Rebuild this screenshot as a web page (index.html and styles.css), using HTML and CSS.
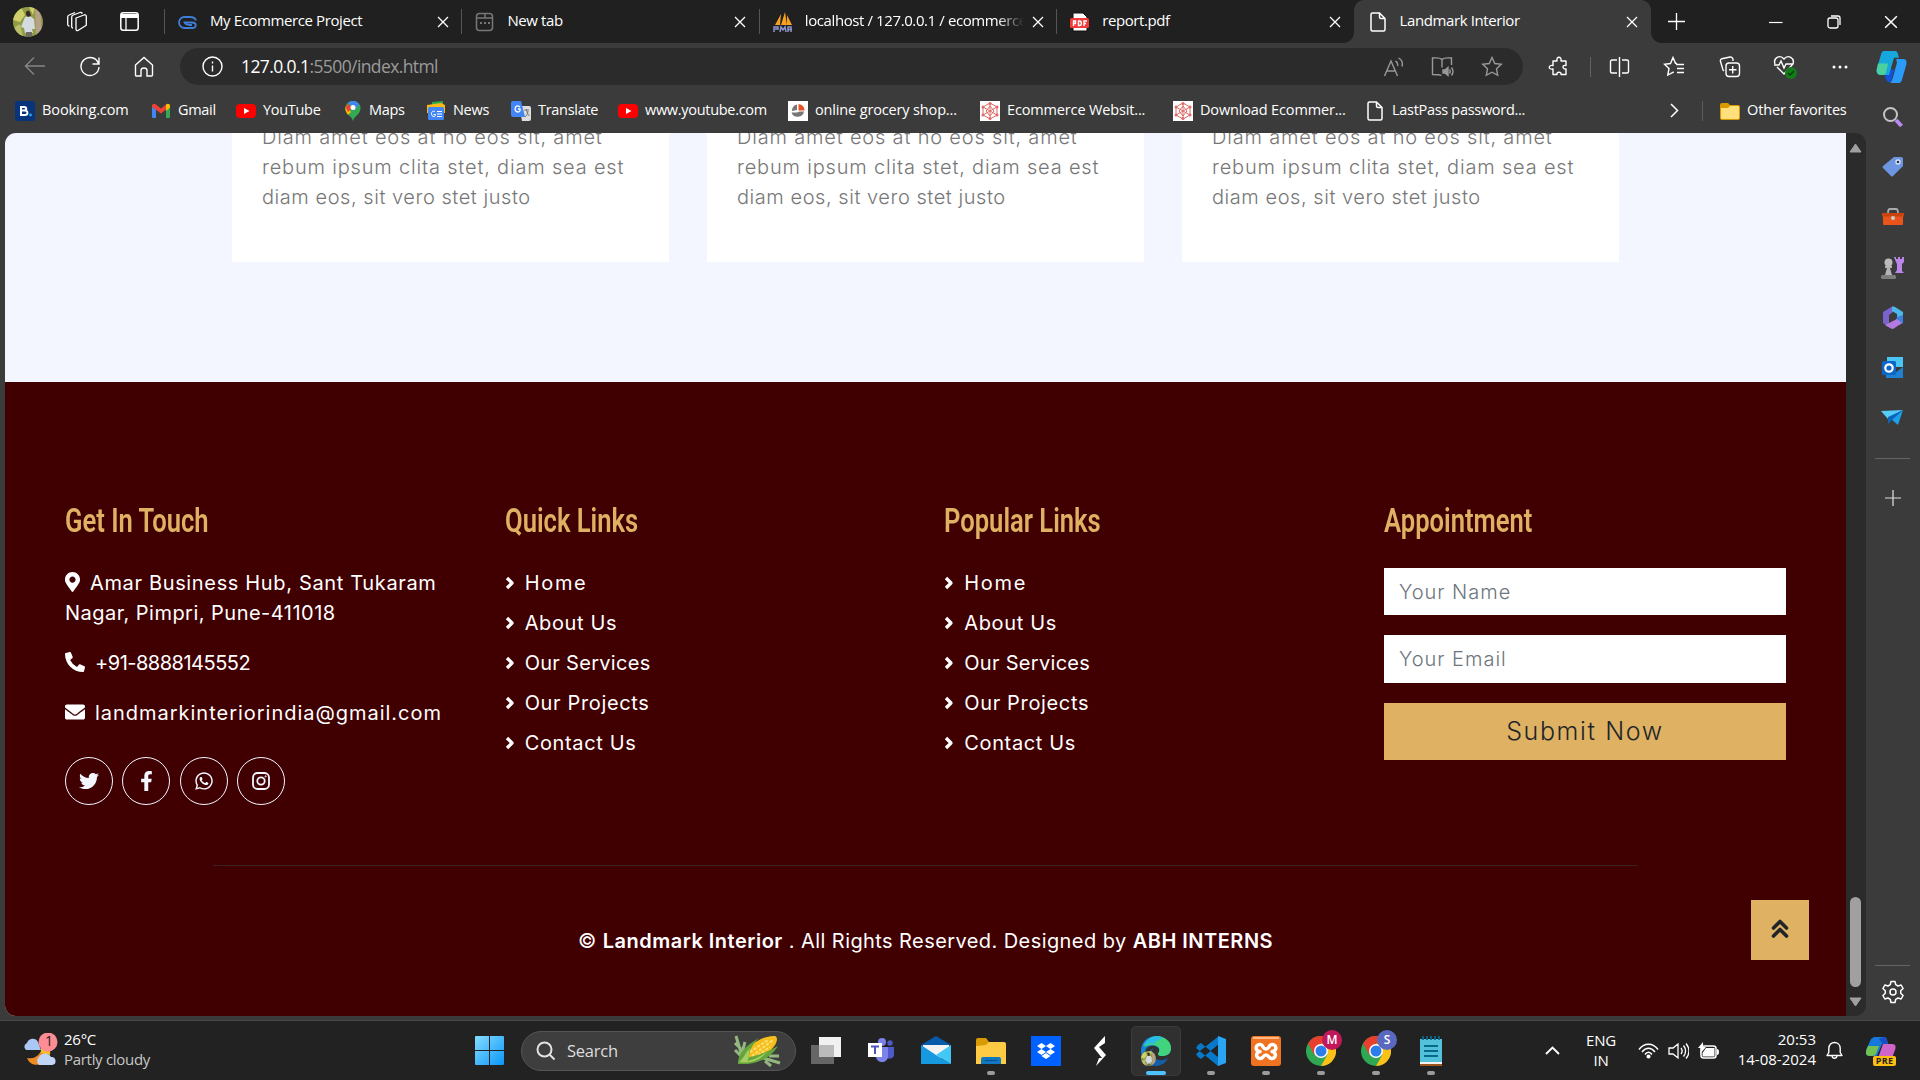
FILE: index.html
```html
<!DOCTYPE html>
<html lang="en">
<head>
<meta charset="utf-8">
<title>Landmark Interior</title>
<link rel="stylesheet" href="styles.css">
</head>
<body>
<svg class="sprite" aria-hidden="true">
  <symbol id="close" viewBox="0 0 12 12"><path d="M1 1l10 10M11 1L1 11" fill="none" stroke="currentColor" stroke-width="1.3"/></symbol>
  <symbol id="page" viewBox="0 0 16 20"><path d="M2.500 1h7L15 6.500V17.500a1.500 1.500 0 0 1-1.500 1.500h-11A1.500 1.500 0 0 1 1 17.500v-15A1.500 1.500 0 0 1 2.500 1zM9.500 1v4a1.500 1.500 0 0 0 1.500 1.500h4" fill="none" stroke="#fff" stroke-width="1.500"/></symbol>
  <symbol id="yt" viewBox="0 0 20 14"><rect width="20" height="14" rx="4" fill="#f00"/><path d="M8 4l5.500 3L8 10z" fill="#fff"/></symbol>
  <symbol id="mesh" viewBox="0 0 20 20"><path fill="#fff" d="M0 0h20v20H0z"/><g fill="none" stroke="#e06b66" stroke-width="1"><path d="M10 2l7 4v8l-7 4-7-4V6zM10 2v16M3 6l14 8M17 6L3 14M10 5l4 5-4 5-4-5z"/></g><g fill="#e06b66"><circle cx="10" cy="2.500" r="1.500"/><circle cx="10" cy="17.500" r="1.500"/><circle cx="3" cy="6" r="1.500"/><circle cx="17" cy="6" r="1.500"/><circle cx="3" cy="14" r="1.500"/><circle cx="17" cy="14" r="1.500"/></g></symbol>
  <symbol id="plus" viewBox="0 0 18 18"><path d="M9 0v18M0 9h18" stroke="currentColor" stroke-width="1.400"/></symbol>
  <symbol id="angle" viewBox="0 0 10 14"><path d="M2 2l5 5-5 5" fill="none" stroke="#fff" stroke-width="3.300" stroke-linejoin="round"/></symbol>
  <symbol id="portrait" viewBox="0 0 30 30"><clipPath id="round"><circle cx="15" cy="15" r="15"/></clipPath><g clip-path="url(#round)"><path fill="#8f9c45" d="M0 0h30v30H0z"/><path fill="#d0cf6a" d="M0 5l8-5 4 8-5 7-7-2zM22 0h-6l4 8z"/><path fill="#b9a088" d="M22 0h5l2 30h-6z"/><path fill="#b9bf6a" d="M2 20l5-3 3 13H3z"/><path fill="#d3dbe0" d="M12 10l5-1 4 3 1 10h-3l1 4h-8l-1-5-3-1z"/><path fill="#6f6a64" d="M13 25h6v5h-6z"/><path fill="#3b2a24" d="M13 5q2-3 4 0l1 4-3 1-2-2z"/></g></symbol>
  <symbol id="chrome" viewBox="0 0 30 30"><circle cx="15" cy="15" r="15" fill="#30a853"/><path fill="#e8402f" d="M2 7.500A15 15 0 0 1 28 7.500H15L8.500 19z"/><path fill="#fbc116" d="M28 7.500A15 15 0 0 1 15 30l6.500-11.500L15 7.500z"/><circle cx="15" cy="15" r="7" fill="#fff"/><circle cx="15" cy="15" r="5.500" fill="#2b7de9"/></symbol>
</svg>

<div class="browser">
  <header class="tabs">
    <div class="tab-tools">
      <svg class="avatar" viewBox="0 0 30 30"><use href="#portrait"/></svg>
      <svg width="22" height="21" viewBox="0 0 22 21" fill="none" stroke="#fff" stroke-width="1.300"><path d="M10 7l8-3a1.500 1.500 0 0 1 2.300 1.300v9L12 19.500c-1.500.5-2-.5-2-1.500z" stroke-linejoin="round"/><path d="M7 17c-1 0-1.500-1-1.300-2V6c0-1 .6-1.700 1.500-2L14 1.500c1-.3 2 .2 2.300 1.200M3.500 15c-1.300 0-2-1-1.800-2V6c0-1 .6-1.700 1.500-2L9 1.500"/></svg>
      <svg width="19" height="19" viewBox="0 0 19 19"><rect x=".8" y=".8" width="17.400" height="17.400" rx="2.500" fill="none" stroke="#fff" stroke-width="1.500"/><path d="M1 2h17v4H1z" fill="#fff"/><path d="M6 6v12" stroke="#fff" stroke-width="1.300"/></svg>
    </div>
    <div class="tab">
      <svg class="fav" viewBox="0 0 20 20" fill="none" stroke="#3f7fd9" stroke-width="1.800"><path d="M18 8.500C17 5.500 15 5 12 5H6.500a5 5 0 0 0 0 11H14c5 0 5-5.500 0-5.500H6.500c1 2.500 3 2.500 5 2.500H14"/></svg>
      <span class="tab-name">My Ecommerce Project</span><svg class="x"><use href="#close"/></svg>
    </div>
    <div class="tab">
      <svg class="fav" viewBox="0 0 20 20" fill="none" stroke="#777" stroke-width="1.500"><rect x="1.500" y="1.500" width="16" height="17" rx="3"/><path d="M1.500 6h16M10 2v4"/><path d="M5 11h2M9 11h2M13 11h2" stroke-width="2"/></svg>
      <span class="tab-name">New tab</span><svg class="x"><use href="#close"/></svg>
    </div>
    <div class="tab">
      <svg class="fav" viewBox="0 0 20 20"><path fill="#f7a021" d="M8 2l-6 11h5zM12 0L8 13h6zM14 3l5 10h-5z"/><path fill="none" stroke="#8d93cc" stroke-width="1.500" d="M1 20v-5h4v2H2M7 20l1-5 2 3 2-3 1 5M15 20v-5h3v5M15 17.500h4"/></svg>
      <span class="tab-name fade">localhost / 127.0.0.1 / ecommerce</span><svg class="x"><use href="#close"/></svg>
    </div>
    <div class="tab">
      <svg class="fav" viewBox="0 0 20 20"><path fill="#fff" stroke="#111" d="M3 1h10l4 4v14H3z"/><rect y="6" width="19" height="10" rx="1.500" fill="#f33a3a"/><path fill="none" stroke="#fff" stroke-width="1.400" d="M3.500 14V9h2v2.500h-2M8.500 9v4.500h1c2.500 0 2.500-4.500 0-4.500zM14 14V9h3M14 11.500h2"/></svg>
      <span class="tab-name">report.pdf</span><svg class="x"><use href="#close"/></svg>
    </div>
    <div class="tab active">
      <svg class="fav sheet"><use href="#page"/></svg>
      <span class="tab-name">Landmark Interior</span><svg class="x"><use href="#close"/></svg>
    </div>
    <div class="new-tab"><svg width="17" height="17"><use href="#plus"/></svg></div>
    <div class="window-keys">
      <svg width="14" height="14" viewBox="0 0 14 14"><path d="M0 7.500h13.500" stroke="#fff" stroke-width="1.200"/></svg>
      <svg width="14" height="14" viewBox="0 0 14 14" fill="none" stroke="#fff" stroke-width="1.300"><rect x="1" y="3" width="10" height="10" rx="2"/><path d="M4 1h7a2 2 0 0 1 2 2v7"/></svg>
      <svg width="14" height="14"><use href="#close"/></svg>
    </div>
  </header>

  <div class="toolbar">
    <div class="nav-keys">
      <svg class="dim" width="22" height="20" viewBox="0 0 22 20"><path d="M21 10H2M10 1.500L1.500 10l8.500 8.500"/></svg>
      <svg width="22" height="22" viewBox="0 0 22 22"><path d="M19.500 7.500A9 9 0 1 0 20 11M20 1.500v6.500h-6.500"/></svg>
      <svg width="20" height="22" viewBox="0 0 20 22"><path d="M1.500 9L10 1.500 18.500 9v10a1 1 0 0 1-1 1H13v-5.500c0-2-1-2.500-3-2.500s-3 .5-3 2.500V20H2.500a1 1 0 0 1-1-1z"/></svg>
    </div>
    <div class="address">
      <svg class="info" width="21" height="21" viewBox="0 0 21 21"><circle cx="10.500" cy="10.500" r="9.500"/><path d="M10.500 9.500v6M10.500 5.500v2"/></svg>
      <span class="url"><b>127.0.0.1</b>:5500/index.html</span>
      <div class="address-keys">
        <svg width="21" height="20" viewBox="0 0 21 20"><path d="M1.500 19L8 4l6.500 15M4 14h8M12.500 4c2 1 2.500 3 2 5M15.500 1c3.500 2 4.500 5 3.500 8.500"/></svg>
        <svg width="23" height="22" viewBox="0 0 23 22"><path d="M11 3.500c-2-2-4-2-9.500-1.500v16.500c5 0 7.500 0 9 1M11 3.500v8M11 3.500c2-2 4-2 9.500-1.500v7"/><path d="M12 14h2l3-2.500v8L14 17h-2z" fill="#999"/><path d="M18.500 13.500q1.500 2 0 4M20.500 11.500q3 4 0 8"/></svg>
        <svg width="22" height="21" viewBox="0 0 22 21"><path d="M11 1.500l2.800 6 6.500.8-4.800 4.500 1.200 6.500L11 16.200l-5.700 3.100 1.200-6.500L1.700 8.300l6.500-.8z"/></svg>
      </div>
    </div>
    <div class="tool-keys">
      <svg width="22" height="22" viewBox="0 0 22 22"><path d="M5 5h4c-1-5 5-5 4 0h5v4.500c-4-1-4 4 0 3.500v5.500h-5c1-3-5-3-4 0H5V13c-5 1-5-4.500 0-3.500z" stroke-linejoin="round"/></svg>
      <i></i>
      <svg width="21" height="20" viewBox="0 0 21 20"><path d="M8 3H3a1.500 1.500 0 0 0-1.500 1.500v10A1.500 1.500 0 0 0 3 16h5M13 3h5a1.500 1.500 0 0 1 1.500 1.500v10A1.500 1.500 0 0 1 18 16h-5M10.500 0v20"/></svg>
      <svg width="22" height="21" viewBox="0 0 22 21"><path d="M14 7.500l-1.500-.2L10 1.500l-2.500 6-6 .8L6 12.500l-1.200 6.500 6-3.200M13 8.500h8M14 12.500h7M14 16.500h7"/></svg>
      <svg width="22" height="22" viewBox="0 0 22 22"><rect x="7" y="7" width="13.500" height="13.500" rx="3"/><path d="M13.700 10v7.500M10 13.700h7.500M5 15l-1-1L1.500 5.500C1 4 2 3 3 2.700L11 1c1.500-.3 2.500.5 3 2v2"/></svg>
      <svg width="24" height="24" viewBox="0 0 24 24"><path d="M2 9C0 3 7-1 11 4c4-5 11-1 9 5l-9 10L4 12M1 10h5l2-4 3 7 2-4h7"/><circle cx="18" cy="18" r="6" fill="#127c18" stroke="none"/><path d="M15 18l2 2 4-4" stroke="#0a3a0a"/></svg>
      <svg width="18" height="6" viewBox="0 0 18 6"><g fill="#fff" stroke="none"><circle cx="3" cy="3" r="1.500"/><circle cx="9" cy="3" r="1.500"/><circle cx="15" cy="3" r="1.500"/></g></svg>
      <svg width="31" height="32" viewBox="0 0 31 28" preserveAspectRatio="none"><g stroke="none"><path fill="#1451dc" d="M8 16h10l-3 11c-4 1-5-2-6-5z"/><path fill="#16a7dc" d="M8 0h11c3 0 3 3 4 6h-5l-5 15H5c-4 0-5-3-4-6L5 3c.500-2 1.500-3 3-3z"/><path fill="#4bd1a0" d="M2 11h10l-2 8c-1 2-2 2-4 2-5 0-6-3-5-6z"/><path fill="#2a9bfa" d="M20 7h7c4 0 4 3 3 6l-4 12c-1 3-2 3-4 3h-8c2-1 2-3 3-5l4-13z"/></g></svg>
    </div>
  </div>

  <div class="body">
    <div class="left">
      <nav class="bookmarks">
        <a><svg viewBox="0 0 20 20"><rect width="20" height="20" rx="3" fill="#08347c"/><path d="M6 5v10M5 6h4c3 0 3 3.500 0 3.500H6h4c3.500 0 3 4.500 0 4.500H5" fill="none" stroke="#fff" stroke-width="2"/><circle cx="15.500" cy="14" r="1.400" fill="#27a8e8"/></svg><span>Booking.com</span></a>
        <a><svg viewBox="0 0 20 20"><path fill="#4285f4" d="M1 5h4v12H2q-1 0-1-1z"/><path fill="#34a853" d="M15 5h4v11q0 1-1 1h-3z"/><path fill="#ea4335" d="M1 5c0-2 2-3 4-1.500l5 4 5-4v5L10 12.500 1 6z"/><path fill="#fbbc04" d="M15 3.500C17 2 19 3 19 5v1.500L15 10z"/></svg><span>Gmail</span></a>
        <a><svg><use href="#yt"/></svg><span>YouTube</span></a>
        <a class="maps"><svg viewBox="0 0 20 20"><path fill="#34a853" d="M4 12C0 6 4 0 10 0s10 6 6 12c-2 3-5 4-6 8-1-4-4-5-6-8z"/><path fill="#fbbc04" d="M3 5l5 6-3 3C2 10 2 8 3 5z"/><path fill="#ea4335" d="M4 3l6 3-5 5-2-4z"/><path fill="#4285f4" d="M5 2c4-4 10-2 11 2l-6 6V6z"/><circle cx="10" cy="6.500" r="2.500" fill="#fff"/></svg><span>Maps</span></a>
        <a><svg viewBox="0 0 20 20"><path fill="#2ca84f" d="M6 1l11-1v8H6z"/><path fill="#f9b916" d="M1 4l14-2 4 2v8H1z"/><rect x="2" y="6" width="16" height="13" rx="1.500" fill="#4285f4"/><path d="M9 10.500c-4-2-5 5-1 5 1.500 0 1.500-2 1.500-2H7.500M11 10.500h5M11 13h5M11 15.500h5" fill="none" stroke="#fff"/></svg><span>News</span></a>
        <a><svg viewBox="0 0 20 20"><path fill="#ddd" d="M8 5h10q2 0 2 2v11q0 2-2 2h-7z"/><path fill="#4285f4" d="M2 0h8l4 16H2q-2 0-2-2V2q0-2 2-2z"/><path d="M9 6C4 2 2 11 7 11c3 0 2-3 2-3H7" fill="none" stroke="#fff" stroke-width="1.300"/><path d="M13 9h5M15.500 8c0 4 2 6 3 7M17 10c0 3-2 5-3 6" stroke="#777" fill="none"/></svg><span>Translate</span></a>
        <a><svg><use href="#yt"/></svg><span>www.youtube.com</span></a>
        <a class="wide"><svg viewBox="0 0 20 20"><path fill="#fff" d="M0 0h20v20H0z"/><path fill="#777" d="M9 3.500V9l-5 1a6 6 0 0 1 5-6.500zM3.500 11.500H9l2.500-1H16a6.500 6.500 0 0 1-12.500 1z"/><path fill="#e65222" d="M10.500 3q6 1 6 6.500h-6z"/></svg><span>online grocery shop...</span></a>
        <a class="wide"><svg><use href="#mesh"/></svg><span>Ecommerce Websit...</span></a>
        <a class="wide"><svg><use href="#mesh"/></svg><span>Download Ecommer...</span></a>
        <a><svg class="sheet"><use href="#page"/></svg><span>LastPass password...</span></a>
        <svg class="more" width="9" height="15" viewBox="0 0 9 15"><path d="M1 1l6.500 6.500L1 14" fill="none" stroke="#fff" stroke-width="1.500"/></svg>
        <i></i>
        <a class="wide"><svg viewBox="0 0 20 20"><path fill="#d99a00" d="M0 4q0-2 2-2h6l2 2h8q2 0 2 2v11q0 2-2 2H2q-2 0-2-2z"/><path fill="#ffe07d" d="M1 7h7l2-2h8q1 0 1 1v11q0 1-1 1H2q-1 0-1-1z"/></svg><span>Other favorites</span></a>
      </nav>

      <div class="viewport">
        <main class="site">
          <section class="services">
            <article class="card">Diam amet eos at no eos sit, amet<br>rebum ipsum clita stet, diam sea est<br><span>diam eos, sit vero stet justo</span></article>
            <article class="card">Diam amet eos at no eos sit, amet<br>rebum ipsum clita stet, diam sea est<br><span>diam eos, sit vero stet justo</span></article>
            <article class="card">Diam amet eos at no eos sit, amet<br>rebum ipsum clita stet, diam sea est<br><span>diam eos, sit vero stet justo</span></article>
          </section>
          <footer class="footer">
            <div class="columns">
              <div>
                <h4>Get In Touch</h4>
                <p><svg width="15" height="20" viewBox="0 0 384 512"><path fill="#fff" d="M172.268 501.670C26.970 291.031 0 269.413 0 192 0 85.961 85.961 0 192 0s192 85.961 192 192c0 77.413-26.970 99.031-172.268 309.670-9.535 13.774-29.930 13.773-39.464 0zM192 272c44.183 0 80-35.817 80-80s-35.817-80-80-80-80 35.817-80 80 35.817 80 80 80z"/></svg>Amar Business Hub, Sant Tukaram<br><span class="town">Nagar, Pimpri, Pune-411018</span></p>
                <p class="phone"><svg width="20" height="20" viewBox="0 0 512 512"><path fill="#fff" d="M497.390 361.800l-112-48a24 24 0 0 0-28 6.900l-49.600 60.600A370.660 370.660 0 0 1 130.600 204.110l60.600-49.600a23.940 23.940 0 0 0 6.900-28l-48-112A24.160 24.160 0 0 0 122.600.61l-104 24A24 24 0 0 0 0 48c0 256.500 207.900 464 464 464a24 24 0 0 0 23.400-18.600l24-104a24.290 24.290 0 0 0-14.010-27.600z"/></svg>+91-8888145552</p>
                <p class="mail"><svg width="20" height="20" viewBox="0 0 512 512"><path fill="#fff" d="M502.300 190.800c3.900-3.100 9.700-.2 9.700 4.700V400c0 26.500-21.500 48-48 48H48c-26.500 0-48-21.500-48-48V195.600c0-5 5.700-7.800 9.700-4.700 22.400 17.400 52.100 39.500 154.100 113.600 21.100 15.400 56.700 47.800 92.200 47.600 35.700.3 72-32.800 92.300-47.600 102-74.100 131.600-96.300 154-113.700zM256 320c23.200.4 56.600-29.200 73.400-41.400 132.700-96.300 142.800-104.700 173.400-128.700 5.800-4.500 9.200-11.500 9.200-18.900v-19c0-26.500-21.500-48-48-48H48c-26.500 0-48 21.500-48 48v19c0 7.400 3.400 14.300 9.200 18.900 30.600 23.900 40.700 32.400 173.400 128.700 16.800 12.200 50.200 41.800 73.400 41.400z"/></svg>landmarkinteriorindia@gmail.com</p>
                <div class="social">
                  <a><svg width="20" height="20" viewBox="0 0 512 512"><path fill="#f4f6ff" d="M459.370 151.716c.325 4.548.325 9.097.325 13.645 0 138.720-105.583 298.558-298.558 298.558-59.452 0-114.680-17.219-161.137-47.106 8.447.974 16.568 1.299 25.340 1.299 49.055 0 94.213-16.568 130.274-44.832-46.132-.975-84.792-31.188-98.112-72.772 6.498.974 12.995 1.624 19.818 1.624 9.421 0 18.843-1.300 27.614-3.573-48.081-9.747-84.143-51.980-84.143-102.985v-1.299c13.969 7.797 30.214 12.670 47.431 13.319-28.264-18.843-46.781-51.005-46.781-87.391 0-19.492 5.197-37.360 14.294-52.954 51.655 63.675 129.300 105.258 216.365 109.807-1.624-7.797-2.599-15.918-2.599-24.040 0-57.828 46.782-104.934 104.934-104.934 30.213 0 57.502 12.670 76.670 33.137 23.715-4.548 46.456-13.320 66.599-25.340-7.798 24.366-24.366 44.833-46.132 57.827 21.117-2.273 41.584-8.122 60.426-16.243-14.292 20.791-32.161 39.308-52.628 54.253z"/></svg></a>
                  <a><svg width="13" height="20" viewBox="0 0 320 512"><path fill="#f4f6ff" d="M279.140 288l14.220-92.660h-88.910v-60.130c0-25.350 12.420-50.060 52.240-50.060h40.420V6.260S260.430 0 225.360 0c-73.220 0-121.080 44.380-121.080 124.720v70.620H22.890V288h81.390v224h100.170V288z"/></svg></a>
                  <a><svg width="18" height="20" viewBox="0 0 448 512"><path fill="#f4f6ff" d="M380.900 97.100C339 55.100 283.200 32 223.900 32c-122.400 0-222 99.600-222 222 0 39.100 10.200 77.300 29.600 111L0 480l117.700-30.900c32.400 17.700 68.900 27 106.100 27h.1c122.300 0 224.100-99.600 224.100-222 0-59.300-25.200-115-67.100-157zm-157 341.600c-33.200 0-65.700-8.900-94-25.700l-6.700-4-69.800 18.300L72 359.200l-4.400-7c-18.500-29.400-28.200-63.300-28.200-98.200 0-101.700 82.800-184.500 184.600-184.500 49.300 0 95.600 19.200 130.400 54.100 34.800 34.900 56.200 81.200 56.100 130.500 0 101.800-84.900 184.600-186.600 184.600zm101.200-138.200c-5.500-2.800-32.800-16.200-37.900-18-5.100-1.900-8.800-2.800-12.500 2.800-3.700 5.600-14.300 18-17.600 21.800-3.200 3.700-6.500 4.200-12 1.400-32.600-16.300-54-29.100-75.500-66-5.700-9.800 5.700-9.100 16.300-30.300 1.800-3.700.9-6.900-.5-9.700-1.400-2.800-12.500-30.100-17.100-41.200-4.500-10.800-9.100-9.300-12.500-9.500-3.200-.2-6.900-.2-10.600-.2-3.700 0-9.700 1.400-14.800 6.900-5.100 5.600-19.400 19-19.400 46.300 0 27.300 19.900 53.700 22.600 57.400 2.800 3.700 39.100 59.700 94.800 83.800 35.200 15.200 49 16.500 66.600 13.900 10.700-1.600 32.800-13.400 37.400-26.400 4.600-13 4.600-24.100 3.200-26.400-1.300-2.500-5-3.900-10.500-6.600z"/></svg></a>
                  <a><svg width="18" height="18" viewBox="0 0 18 18" fill="none" stroke="#f4f6ff" stroke-width="1.800"><rect x="1" y="1" width="16" height="16" rx="4.500"/><circle cx="9" cy="9" r="3.700"/><circle cx="13.600" cy="4.400" r=".6" stroke-width="1"/></svg></a>
                </div>
              </div>
              <div>
                <h4>Quick Links</h4>
                <ul>
                  <li class="home"><svg><use href="#angle"/></svg>Home</li><li><svg><use href="#angle"/></svg>About Us</li><li class="serv"><svg><use href="#angle"/></svg>Our Services</li><li><svg><use href="#angle"/></svg>Our Projects</li><li><svg><use href="#angle"/></svg>Contact Us</li>
                </ul>
              </div>
              <div>
                <h4>Popular Links</h4>
                <ul>
                  <li class="home"><svg><use href="#angle"/></svg>Home</li><li><svg><use href="#angle"/></svg>About Us</li><li class="serv"><svg><use href="#angle"/></svg>Our Services</li><li><svg><use href="#angle"/></svg>Our Projects</li><li><svg><use href="#angle"/></svg>Contact Us</li>
                </ul>
              </div>
              <form>
                <h4>Appointment</h4>
                <input type="text" placeholder="Your Name">
                <input type="text" placeholder="Your Email">
                <button type="button">Submit Now</button>
              </form>
            </div>
            <div class="copyright"><span>© <b>Landmark Interior</b> . All Rights Reserved. Designed by <b>ABH INTERNS</b></span></div>
          </footer>
          <a class="to-top"><svg width="18" height="20" viewBox="0 0 18 20"><path d="M2.500 9L9 2.500 15.500 9M2.500 17L9 10.500l6.500 6.500" fill="none" stroke="#212529" stroke-width="3.600" stroke-linejoin="round" stroke-linecap="round"/></svg></a>
        </main>
        <div class="scrollbar">
          <svg width="13" height="10" viewBox="0 0 13 10"><path d="M6.500 1L12 9H1z" fill="#a0a0a0" stroke="#a0a0a0" stroke-linejoin="round"/></svg>
          <div class="thumb"></div>
          <svg width="13" height="10" viewBox="0 0 13 10"><path d="M6.500 9L12 1H1z" fill="#a0a0a0" stroke="#a0a0a0" stroke-linejoin="round"/></svg>
        </div>
      </div>
    </div>

    <aside class="sidebar">
      <svg viewBox="0 0 24 24"><circle cx="9.500" cy="9.500" r="6.500" fill="none" stroke="#c4c4c4" stroke-width="2"/><path d="M15 15l5.500 6" stroke="#b98af0" stroke-width="4"/></svg>
      <svg viewBox="0 0 24 24"><path fill="#6d96e2" d="M13 2h7q2 0 2 2v7L12 21q-1 1-2 0l-8-8q-1-1 0-2z"/><circle cx="17" cy="7" r="2" fill="#26334f" stroke="#dce6f8" stroke-width="1.300"/></svg>
      <svg viewBox="0 0 24 24"><path d="M7 8q0-4 2-4h6q2 0 2 4" fill="none" stroke="#aaa" stroke-width="1.800"/><rect x="2" y="8" width="20" height="12" rx="1" fill="#e8541c"/><path fill="#c9430f" d="M1 8h22v3.500H1z"/><circle cx="12" cy="13" r="2" fill="#ccc"/></svg>
      <svg viewBox="0 0 24 24"><path fill="#bb86ec" d="M13 1h2v2h2V1h2v2h2V1h2v5l-2 2v7l2 2h-9l2-3V8l-1-2z"/><path fill="#b3b3b3" d="M4 10h7v2H9l2 7H4l2-7H4z"/><circle cx="7.500" cy="6.500" r="4" fill="#bbb"/><rect y="19" width="15" height="4" rx="1.500" fill="#7d7d7d"/></svg>
      <svg viewBox="0 0 24 24"><path fill="#7a63cb" d="M12 0L2 6v11l6 4V9l4-3z"/><path fill="#4bb9eb" d="M11 1q1-1 3 0l8 5v8l-6-3V8l-5-3z"/><path fill="#3d80dc" d="M22 9v8l-4 2-3-5 1-3z"/><path fill="#b37ae0" d="M4 19l8-4 4-2 5 4-9 6q-2 0-8-4z"/></svg>
      <svg viewBox="0 0 24 24"><path fill="#49c6f5" d="M6 1h16v10H6z"/><path fill="#1e81d2" d="M5 8h9v9l8-6v11H5z"/><rect x="1" y="5" width="14" height="14" rx="1.500" fill="#0a67c8"/><circle cx="8" cy="12" r="3.700" fill="none" stroke="#fff" stroke-width="2.200"/></svg>
      <svg viewBox="0 0 24 24"><path fill="#56ccfa" d="M0 5l22-1L7 13z"/><path fill="#1ba0ea" d="M22 4l-5 15-7-6z"/><path fill="#0e65b7" d="M22 4L7 11v7l4-4z"/></svg>
      <hr>
      <svg class="small"><use href="#plus"/></svg>
      <div class="settings"><hr>
      <svg viewBox="0 0 24 24" fill="none" stroke="#fff" stroke-width="1.500"><path stroke-linejoin="round" d="M10 1.500h4l.7 3.200 2.300 1.300 3.100-1 2 3.500-2.400 2.200v2.600l2.400 2.200-2 3.500-3.100-1-2.300 1.300-.7 3.200h-4l-.7-3.200L7 18l-3.100 1-2-3.500 2.400-2.200v-2.600L1.900 8.500l2-3.500L7 6l2.300-1.300z"/><circle cx="12" cy="12" r="3"/></svg></div>
    </aside>
  </div>
</div>

<footer class="taskbar">
  <div class="weather">
    <svg width="36" height="36" viewBox="0 0 36 36"><path fill="#f28a22" d="M20 8c5 5 8 12 2 20-5 6-15 5-18-3 11 2 16-7 16-17z"/><path fill="#f7bd26" d="M18 12c7 0 10 4 9 10l-9-2z"/><path fill="#a9c8f4" d="M3 17a4 4 0 0 1 1-7 6 6 0 0 1 11-1l3 8z"/><path fill="#c3d5f5" d="M16 32a5 5 0 0 1 0-8 7 7 0 0 1 12 0 4 4 0 0 1 1 8z"/><circle cx="25" cy="9" r="9.500" fill="#fd8c95"/></svg>
    <span class="count">1</span>
    <div class="forecast"><span>26°C</span><span class="soft">Partly cloudy</span></div>
  </div>
  <div class="apps">
    <svg class="start" viewBox="0 0 29 29"><defs><linearGradient id="win" x2="1" y2="1"><stop stop-color="#86ddff"/><stop offset="1" stop-color="#0a96f8"/></linearGradient></defs><path fill="url(#win)" d="M0 1q0-1 1-1h13v14H0zM15 0h13q1 0 1 1v13H15zM0 15h14v14H1q-1 0-1-1zM15 15h14v13q0 1-1 1H15z"/></svg>
    <div class="search">
      <svg width="20" height="20" viewBox="0 0 20 20" fill="none" stroke="#e2e2e2" stroke-width="2"><circle cx="8.500" cy="8.500" r="7"/><path d="M13.500 13.500l5 5"/></svg>
      <span>Search</span>
      <svg width="50" height="32" viewBox="0 0 50 32"><g fill="none" stroke="#93b77e" stroke-width="3"><path d="M3 1l6 20M2 8l6 6M12 7L9 18M2 15l8 8M30 23l17 5M36 21l10 0M32 26l6 5"/></g><path fill="#f5bd1d" d="M12 21C15 8 33 0 42 1c5 2 0 12-8 17-7 5-17 9-22 8z"/><path d="M17 17l18-12M19 21L40 5M25 20l12-8" stroke="#ffe170" stroke-width="2" stroke-dasharray="3 1.500"/><path fill="#65a63c" d="M5 27C6 17 14 10 26 3c-7 7-10 13-10 19 8-1 18-5 29-11-7 12-21 19-40 18z"/><path fill="#a6cf62" d="M6 27c4-2 6-9 11-14-2 7 0 10-3 13 7-1 14-5 20-9-7 8-15 12-28 10z"/></svg>
    </div>
    <div class="app"><svg viewBox="0 0 30 30"><path fill="#f1f1f1" d="M8 1h22v20H8z"/><path fill="#666" d="M0 9h23v19H0z"/><path fill="#bbb" d="M8 9h15v12H8z"/></svg></div>
    <div class="app"><svg viewBox="0 0 30 30"><circle cx="16" cy="6" r="4" fill="#7b83eb"/><circle cx="24" cy="7" r="2.700" fill="#5059c9"/><path fill="#5059c9" d="M20 11h8v7c0 5-4 5-7 4z"/><path fill="#7b83eb" d="M10 11h12v9c0 8-12 8-12 0z"/><path fill="#fff" d="M2 7h14v14H2z"/><path fill="none" stroke="#4b53bc" stroke-width="2" d="M5 10.500h8M9 10v8"/></svg></div>
    <div class="app"><svg viewBox="0 0 30 30"><path fill="#085ba9" d="M0 9l15-9 15 9v5H0z"/><path fill="#f3f3f3" d="M2 9h26v8L15 25 2 16z"/><path fill="#1799df" d="M0 9l15 10 15 9H0z"/><path fill="#43c7f6" d="M30 9v19L15 19z"/></svg></div>
    <div class="app run"><svg viewBox="0 0 30 30"><path fill="#d99a05" d="M0 4q0-2 2-2h8l3 4v5H0z"/><path fill="#ffcb45" d="M0 10l10-1 3-3h15q2 0 2 2v20H0z"/><path fill="#1177c3" d="M5 28v-5q0-2 2-2h16q2 0 2 2v5z"/><path stroke="#064d8b" d="M9 24.500h12"/></svg></div>
    <div class="app"><svg viewBox="0 0 30 30"><path fill="#0061fe" d="M0 0h30v30H0z"/><path fill="#fff" d="M10.500 7L6 10l4.500 3 4.500-3zM19.500 7L15 10l4.500 3 4.500-3zM10.500 13L6 16l4.500 3 4.500-3zM19.500 13L15 16l4.500 3 4.500-3zM15 17l-4.500 3 4.500 3 4.500-3z"/></svg></div>
    <div class="app"><svg viewBox="0 0 30 30"><path fill="#fff" d="M19 0v7l-6 4 7 8-10 11 3-8h3L8 12 18 1z"/></svg></div>
    <div class="app current"><svg viewBox="0 0 30 30"><path fill="#1585d4" d="M0 15C0 5 8 0 15 0s15 5 15 12c0 6-4 8-9 8-4 0-5-2-3-4 2-5-6-8-11-5-6 4-4 17 8 19C6 30 0 23 0 15z"/><path fill="#42d47c" d="M17 0c8 1 13 6 13 12s-4 8-9 8c-4 0-5-2-3-4 3-7-9-9-15-5C6 3 11 0 17 0z"/><path fill="#2bbce6" d="M2 10C6 1 16-2 22 2c-5 2-8 4-9 6C9 7 5 8 2 10z"/><path fill="#145eaa" d="M12 12c-4 9 6 16 15 10-3 6-8 8-12 8-8-1-11-12-3-18z"/><use href="#portrait" x="0" y="15" width="15" height="15"/></svg></div>
    <div class="app run"><svg viewBox="0 0 30 30"><path fill="#0879c9" d="M2 9l3-2 18 15-1 8L0 12zM2 21l3 2L24 7l-1-7L0 18z"/><path fill="#2aa5f3" d="M22 0l8 3v24l-8 3z"/></svg></div>
    <div class="app run"><svg viewBox="0 0 30 30"><rect width="30" height="30" rx="3" fill="#ef7321"/><path d="M2 2h26" stroke="#ffb888" stroke-width="2"/><path d="M12 11a3.500 3.500 0 1 0-3 4.500 3.500 3.500 0 1 0 3 5.500q3-4 6 0a3.500 3.500 0 1 0 3-5.500A3.500 3.500 0 1 0 18 11q-3 4-6 0z" fill="none" stroke="#fff" stroke-width="3.500" stroke-linejoin="round"/></svg></div>
    <div class="app run"><svg viewBox="0 0 30 30"><use href="#chrome"/></svg><b class="m">M</b></div>
    <div class="app run"><svg viewBox="0 0 30 30"><use href="#chrome"/></svg><b class="s">S</b></div>
    <div class="app run"><svg viewBox="0 0 30 30"><path fill="#f4f2ef" d="M4 24h22v4H4z"/><path fill="#9b551f" d="M4 28h22v2H4z"/><path fill="#53c1da" d="M4 3h22v23H4z"/><path d="M8 10h14M8 15h14M8 20h14M7 0v4M11 0v4M15 0v4M19 0v4M23 0v4" stroke="#08698a" stroke-width="1.800"/></svg></div>
  </div>
  <div class="tray">
    <svg class="up" width="15" height="9" viewBox="0 0 15 9"><path d="M1 8l6.500-6.500L14 8" fill="none" stroke="#fff" stroke-width="1.900"/></svg>
    <div class="lang"><span>ENG</span><span>IN</span></div>
    <svg width="21" height="18" viewBox="0 0 21 18" fill="none" stroke="#fff" stroke-width="1.500"><path d="M1 7.500c5-7 14-7 19 0M4 10c4-5 9-5 13 0M7 12.500c2-3 5-3 7 0"/><circle cx="10.500" cy="14.500" r="1.300" fill="#fff"/></svg>
    <svg width="21" height="18" viewBox="0 0 21 18" fill="none" stroke="#fff" stroke-width="1.300"><path d="M1 6h4l5-4v14l-5-4H1zM13 6c1.500 2 1.500 4 0 6M15.500 3.500c3 4 3 7 0 11M18 1.500c4 5 4 10 0 15"/></svg>
    <svg width="21" height="18" viewBox="0 0 21 18"><rect x="3" y="4" width="15" height="12" rx="2.500" fill="none" stroke="#fff" stroke-width="1.500"/><path fill="#fff" d="M8 6h8.500v8.500h-12V11zM19 7q2 0 2 3t-2 3zM5 0L0 6h3l-1 6 6-7H5z"/></svg>
    <div class="clock"><span>20:53</span><span>14-08-2024</span></div>
    <svg class="bell" width="17" height="19" viewBox="0 0 17 19" fill="none" stroke="#fff" stroke-width="1.400"><path d="M1 14.500l1.800-3V7.500c0-8 11.400-8 11.400 0v4l1.800 3zM6 15c.5 3 4.500 3 5 0" stroke-linejoin="round"/></svg>
    <div class="pre"><svg width="30" height="28" viewBox="0 0 30 28"><path fill="#1579dc" d="M8 0h10c3 0 3 3 4 7h-6l-5 12H4c-4 0-5-3-4-6L5 2z"/><path fill="#74c052" d="M2 9h11l-3 8q-1 2-4 2H4c-4 0-5-3-4-5z"/><path fill="#194fc6" d="M17 0c4 0 4 4 5 7h-5l-4-5z"/><path fill="#cf64c9" d="M17 7h9c4 0 4 3 3 6l-3 8H12z"/></svg><b>PRE</b></div>
  </div>
</footer>
</body>
</html>
```
FILE: styles.css
```css
* { box-sizing: border-box; }
body { margin: 0; width: 1920px; height: 1080px; overflow: hidden; background: #3b3b3b; color: #fff; font: 15px "Open Sans", "Noto Sans", sans-serif; }
svg { display: block; flex: none; }
.sprite { position: absolute; width: 0; height: 0; }

/* Browser chrome */
.browser { height: 1020px; display: flex; flex-direction: column; }
.tabs { height: 43px; flex: none; display: flex; background: #202020; letter-spacing: -.4px; }
.tab-tools { width: 164px; flex: none; display: flex; align-items: center; padding-left: 13px; gap: 23px; }
.tab-tools svg:nth-child(3) { margin-left: 9px; }
.avatar { width: 30px; height: 30px; }
.tab { width: 297.400px; flex: none; display: flex; align-items: center; padding: 0 12.500px 0 14px; background: linear-gradient(#555, #555) 0 9px / 1px 25px no-repeat; }
.fav { width: 20px; height: 20px; margin-right: 12px; }
.fav.sheet { width: 16px; margin: 0 14px 0 2px; }
.tab-name { flex: 1; white-space: nowrap; overflow: hidden; margin-right: 8px; padding-bottom: 3px; }
.fade { -webkit-mask: linear-gradient(90deg, #000 88%, transparent); }
.x { width: 12px; height: 12px; }
.tab.active { position: relative; background: #3b3b3b; border-radius: 10px 10px 0 0; }
.tab.active::before, .tab.active::after { content: ""; position: absolute; bottom: 0; width: 10px; height: 10px; }
.tab.active::before { left: -10px; background: radial-gradient(circle at 0 0, transparent 9.500px, #3b3b3b 10px); }
.tab.active::after { right: -10px; background: radial-gradient(circle at 100% 0, transparent 9.500px, #3b3b3b 10px); }
.new-tab { flex: 1; display: flex; align-items: center; padding-left: 17px; }
.window-keys { display: flex; align-items: center; gap: 43.500px; padding-right: 22px; }

.toolbar { height: 45px; flex: none; display: flex; align-items: center; padding-top: 2px; }
.toolbar svg { fill: none; stroke: #fff; stroke-width: 1.400; }
.nav-keys { width: 180px; flex: none; display: flex; gap: 33px; padding-left: 24px; }
.nav-keys .dim { stroke: #858585; }
.address { width: 1343px; height: 37px; border-radius: 19px; background: #2b2b2b; display: flex; align-items: center; padding-left: 22px; flex: none; }
.url { margin-left: 18px; padding-bottom: 2px; font-size: 17.500px; letter-spacing: -.6px; color: #9b9b9b; }
.url b { font-weight: 400; color: #fff; }
.address-keys { margin-left: auto; display: flex; align-items: center; gap: 27px; padding-right: 20px; }
.address-keys svg { stroke: #999; }
.tool-keys { width: 397px; flex: none; display: grid; grid-template-columns: 50px 12px 46px 64px 47px 64px 45px 58px; justify-items: center; align-items: center; padding-left: 11px; }
.tool-keys i { width: 1px; height: 20px; background: #636363; }

.body { flex: 1; display: flex; min-height: 0; }
.left { width: 1866px; display: flex; flex-direction: column; flex: none; }
.bookmarks { height: 45px; flex: none; display: grid; grid-template-columns: 136px 85px 108px 82px 85px 107px 170px 192px 193px 193px 304px 32px 18px 1fr; align-items: center; padding-left: 15px; font-size: 14.500px; letter-spacing: -.3px; white-space: nowrap; }
.bookmarks a { display: flex; align-items: center; gap: 7px; }
.bookmarks a:first-child { letter-spacing: -.1px; }
.bookmarks span { padding-bottom: 2px; }
.bookmarks .wide { letter-spacing: -.15px; }
.bookmarks .maps { gap: 6px; margin-left: -1px; }
.bookmarks a svg { width: 20px; height: 20px; }
.bookmarks a svg.sheet { width: 16px; margin-left: 1px; margin-right: 2px; }
.bookmarks i { width: 1px; height: 20px; background: #5b5b5b; }
.viewport { height: 883px; margin-left: 5px; display: flex; overflow: hidden; border-radius: 11px; }
.scrollbar { width: 20px; background: #2b2b2b; display: flex; flex-direction: column; align-items: center; padding: 10px 2px 9px 0; }
.thumb { width: 11px; height: 90px; border-radius: 6px; background: #a0a0a0; margin: auto 0 10px; }
.sidebar { flex: 1; display: flex; flex-direction: column; align-items: center; gap: 26.200px; padding: 17px 1px 0 0; }
.sidebar svg { width: 24px; height: 24px; }
.sidebar hr { width: 35px; height: 1px; border: 0; background: #656565; margin: 2px 0 4px; }
.sidebar .small { width: 16px; height: 16px; color: #ddd; }
.settings { margin: auto 0 16px; display: flex; flex-direction: column; align-items: center; gap: 10px; }

/* Website */
.site { position: relative; width: 1841px; font: 20px/30px Inter, sans-serif; background: #f4f6ff; letter-spacing: .65px; display: flex; flex-direction: column; }
.services { height: 249px; flex: none; display: flex; gap: 38px; padding: 0 227px; }
.card { width: 437px; height: 129px; padding: 0 30px; background: #fff; color: #777; font-weight: 300; white-space: nowrap; display: flow-root; letter-spacing: .82px; }
.card::before { content: ""; display: block; margin-top: -11px; }
.card span { letter-spacing: .55px; }
.footer { flex: 1; background: #400002; padding: 117px 60px 0; }
.columns { display: grid; grid-template-columns: repeat(4, 1fr); gap: 37.500px; height: 366px; }
h4 { margin: 0 0 25px; font: 600 33px/44px Roboto, sans-serif; letter-spacing: 0; color: #dfb163; transform: scaleX(.775); transform-origin: left; white-space: nowrap; }
p { margin: 0 0 20px; white-space: nowrap; }
p svg { display: inline-block; vertical-align: -2px; margin-right: 10px; }
.town { letter-spacing: .48px; }
.phone { letter-spacing: -.5px; }
.mail { letter-spacing: .98px; }
.social { display: flex; gap: 9.400px; margin-top: 29px; }
.social a { width: 48px; height: 48px; border: 1px solid #f4f6ff; border-radius: 50%; display: grid; place-items: center; }
ul { list-style: none; margin: 0; padding: 0; display: grid; gap: 10px; }
li { display: flex; align-items: center; gap: 10px; }
li.home { letter-spacing: 1.700px; }
li.serv { letter-spacing: .3px; }
li svg { width: 10px; height: 14px; margin-top: -1px; }
form { display: flex; flex-direction: column; }
form h4 { margin-bottom: 25px; }
input { height: 47.300px; border: 0; padding: 0 15px; margin-bottom: 20px; font: 300 20px Inter, sans-serif; letter-spacing: 1px; }
input::placeholder { color: #6c757d; opacity: 1; }
button { height: 57px; border: 0; padding-bottom: 1px; background: #dfb163; color: #212529; font: 300 25px Inter, sans-serif; letter-spacing: 1.600px; }
.copyright { margin: 0 148px; border-top: 1px solid #3a2024; padding-top: 60px; text-align: center; letter-spacing: .42px; }
.copyright b { font-weight: 600; letter-spacing: .5px; }
.to-top { position: absolute; right: 37px; bottom: 56px; width: 58px; height: 60px; background: #dfb163; display: grid; place-items: center; padding-bottom: 3px; }

/* Taskbar */
.taskbar { height: 60px; border-top: 1px solid #484848; background: #222; display: flex; align-items: center; line-height: 20px; letter-spacing: -.25px; }
.taskbar span { display: block; }
.weather { position: relative; width: 475px; flex: none; display: flex; align-items: center; padding-left: 23px; gap: 5px; }
.forecast { margin-top: -3px; }
.count { position: absolute; left: 45px; top: -1px; font-size: 14px; color: #222; }
.soft { color: #c7c7c7; letter-spacing: -.3px; }
.apps { width: 1078px; display: flex; align-items: center; height: 59px; flex: none; }
.start { width: 29px; height: 29px; }
.search { width: 275px; height: 40px; margin: 0 2px 0 17px; border: 1px solid #555; border-radius: 20px; background: #3e3e3e; display: flex; align-items: center; padding: 0 12px 0 14px; }
.search span { flex: 1; margin-left: 11px; font-size: 16.500px; color: #ddd; }
.app { position: relative; width: 50px; height: 50px; margin-left: 5px; display: grid; place-items: center; border-radius: 5px; }
.search + .app { margin-left: 3px; }
.app svg { width: 30px; height: 30px; }
.run::after, .current::after { content: ""; position: absolute; bottom: 1px; width: 8px; height: 4px; border-radius: 2px; background: #9b9b9b; }
.current { background: #303030; border: 1px solid #3b3b3b; }
.current::after { width: 20px; background: #4cc2ff; bottom: 0; }
.app b { position: absolute; right: 4px; top: 4px; width: 20px; height: 20px; border-radius: 50%; display: grid; place-items: center; font-size: 12px; font-weight: 600; }
.m { background: #c2185b; }
.s { background: #5b68c0; }
.tray { flex: 1; display: flex; align-items: center; gap: 9px; margin-left: -8px; }
.lang { width: 46px; margin: -2px 5px 0 9px; text-align: center; }
.clock { width: 88px; margin-top: -3px; text-align: right; letter-spacing: 0; white-space: nowrap; }
.clock span { margin-left: -8px; }
.bell { margin-left: 1px; }
.pre { position: relative; width: 32px; margin-left: 14px; }
.pre b { position: absolute; left: 7px; top: 19px; width: 23px; height: 10px; border-radius: 2px; background: #ffbf10; color: #222; font-size: 9px; line-height: 10px; text-align: center; letter-spacing: .3px; }
```
